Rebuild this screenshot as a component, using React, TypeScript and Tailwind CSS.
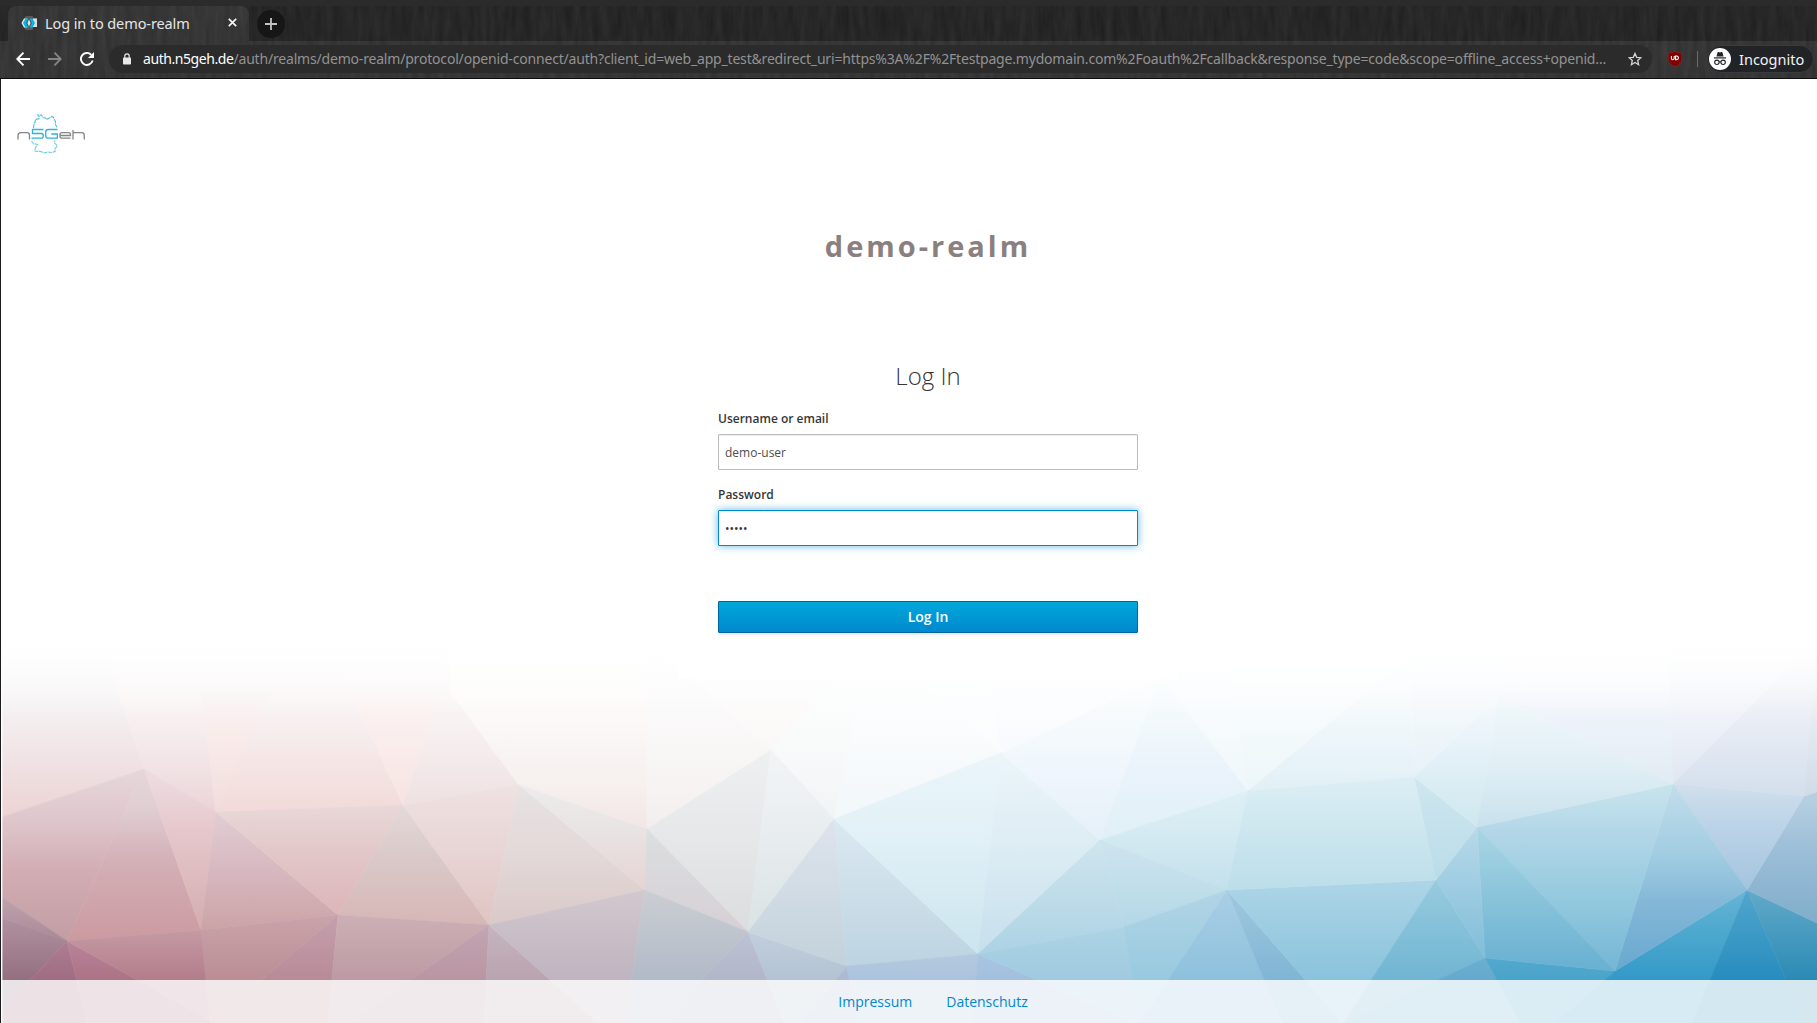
import React from "react";

type Stop = [number, string];
type Facet = { p: string; s: Stop[] };

// Each facet: outline points and colours at page heights, faded vertically.
const facets: Facet[] = [
  { p: "2,640 100,640 119,694 144,769 2,817", s: [[640, "#ffffff"], [700, "#f6f3f4"], [760, "#f0e2e5"], [817, "#ecd3d2"]] },
  { p: "100,640 196,640 202,693 216,812 144,769 119,694", s: [[640, "#ffffff"], [700, "#faf5f4"], [770, "#f1e2e4"], [812, "#ecd3d6"]] },
  { p: "196,640 330,640 342,673 403,805 216,812 202,693", s: [[640, "#ffffff"], [700, "#f9f5f5"], [740, "#f6ebeb"], [812, "#f2dad9"]] },
  { p: "202,693 270,693 216,812", s: [[690, "#f9f5f5"], [730, "#f9edec"], [812, "#f2dcdb"]] },
  { p: "330,640 449,640 441,690 403,805 342,673", s: [[640, "#ffffff"], [690, "#fbf7f7"], [715, "#fbf1f0"], [800, "#f6e4e2"]] },
  { p: "449,640 451,693 519,785 403,805 441,690", s: [[640, "#ffffff"], [700, "#faf6f5"], [800, "#f0e2e3"]] },
  { p: "449,640 647,640 647,829 519,785 451,693", s: [[640, "#ffffff"], [700, "#fdfbfa"], [785, "#f6f0ee"], [829, "#f2e6e5"]] },
  { p: "144,769 2,817 2,897 67,941", s: [[770, "#e6d6da"], [817, "#dfc8cd"], [870, "#d2adb4"], [940, "#c29ea4"]] },
  { p: "144,769 67,941 201,930", s: [[780, "#e4d4d8"], [810, "#dfcdd2"], [860, "#d4b0b7"], [940, "#cb9aa0"]] },
  { p: "144,769 201,930 216,812", s: [[780, "#ecdadf"], [830, "#e6c8cc"], [930, "#d4acae"]] },
  { p: "216,812 201,930 338,915", s: [[820, "#dfcbd0"], [870, "#d8b8c0"], [930, "#cba3a6"]] },
  { p: "216,812 403,805 338,915", s: [[805, "#e9d8d8"], [850, "#e3c8c9"], [915, "#dcb5b8"]] },
  { p: "403,805 338,915 489,925", s: [[805, "#e4d9d9"], [860, "#dac8c8"], [925, "#d7b6b6"]] },
  { p: "403,805 519,785 489,925", s: [[785, "#efe2e2"], [850, "#e8d5d5"], [925, "#dfc4c2"]] },
  { p: "519,785 489,925 645,890", s: [[785, "#e8e2e2"], [860, "#e2d8d7"], [925, "#d9c9c8"]] },
  { p: "519,785 645,890 647,829", s: [[785, "#ecebeb"], [825, "#e9e5e4"], [890, "#e5d4d4"]] },
  { p: "2,897 2,918 67,941", s: [[897, "#c0a3ae"], [940, "#a98996"]] },
  { p: "2,918 67,941 2,1010", s: [[918, "#b191a0"], [980, "#937080"]] },
  { p: "67,941 2,1010 2,1023 87,1023", s: [[941, "#ad7e92"], [980, "#a06c82"]] },
  { p: "67,941 87,1023 215,1023", s: [[941, "#b98498"], [980, "#ac7286"]] },
  { p: "67,941 215,1023 201,930", s: [[930, "#c59aa3"], [980, "#b37d8b"]] },
  { p: "201,930 338,915 210,1023", s: [[915, "#c9a4aa"], [980, "#bb8d95"]] },
  { p: "338,915 210,1023 328,1023", s: [[925, "#c39daa"], [980, "#b98a98"]] },
  { p: "338,915 489,925 350,1023 328,1023", s: [[915, "#ccb0b5"], [980, "#bd9aa3"]] },
  { p: "489,925 350,1023 484,1023", s: [[925, "#c4a5b3"], [980, "#b895a2"]] },
  { p: "489,925 484,1023 598,1023", s: [[925, "#c5b5c0"], [980, "#b9a3af"]] },
  { p: "489,925 645,890 625,1023 598,1023", s: [[890, "#d2c8cf"], [980, "#bfb4bf"]] },
  { p: "647,640 771,750 647,829", s: [[650, "#fefefe"], [690, "#fcfbfc"], [760, "#f8f6f5"], [829, "#f2eeed"]] },
  { p: "647,640 870,640 771,750", s: [[640, "#ffffff"], [690, "#fdfcfc"], [750, "#faf8f7"]] },
  { p: "771,750 870,640 834,819", s: [[660, "#ffffff"], [750, "#f8fafa"], [819, "#f1f4f5"]] },
  { p: "870,640 915,675 1001,753 834,819", s: [[660, "#ffffff"], [720, "#fbfcfd"], [800, "#f3f8fa"]] },
  { p: "870,640 985,640 1001,753 915,675", s: [[660, "#ffffff"], [753, "#f9fcfd"]] },
  { p: "647,829 771,750 748,932", s: [[750, "#eef1f2"], [830, "#e6e8ea"], [930, "#dcdddd"]] },
  { p: "771,750 748,932 834,819", s: [[750, "#f2f5f6"], [850, "#e6ebed"], [930, "#d9e3e4"]] },
  { p: "647,829 645,890 748,932", s: [[830, "#dcdee0"], [930, "#d6d0d5"]] },
  { p: "645,890 748,932 660,1023 625,1023", s: [[890, "#cbced3"], [980, "#b2bac7"]] },
  { p: "748,932 660,1023 785,1023", s: [[932, "#bcc3d4"], [980, "#b1b6c8"]] },
  { p: "748,932 847,966 800,1023 785,1023", s: [[932, "#c2cedd"], [980, "#b3c3d3"]] },
  { p: "847,966 800,1023 858,1023", s: [[966, "#b0bcd6"], [980, "#abb9d3"]] },
  { p: "748,932 834,819 847,966", s: [[820, "#dde3ec"], [880, "#d3dde6"], [960, "#c3d2dc"]] },
  { p: "834,819 847,966 978,954", s: [[820, "#dbe8f1"], [890, "#cddfe9"], [960, "#bed4e2"]] },
  { p: "834,819 1001,753 978,954", s: [[753, "#ebf5fa"], [830, "#e2f1f7"], [950, "#cce5ef"]] },
  { p: "1001,753 978,954 1100,840", s: [[760, "#ebf5f9"], [860, "#daebf3"], [950, "#c6e0ed"]] },
  { p: "1001,753 1100,840 1161,677", s: [[690, "#fafcfd"], [740, "#f3f9fc"], [780, "#eef5fc"], [840, "#e4f0f8"]] },
  { p: "985,640 1161,640 1161,677 1001,753", s: [[660, "#ffffff"], [740, "#f8fbfd"]] },
  { p: "1161,640 1161,677 1100,840 1248,791", s: [[680, "#f9fcfd"], [730, "#f1f8fb"], [770, "#eaf3fb"], [840, "#dff0f6"]] },
  { p: "1161,640 1227,640 1248,791 1161,677", s: [[650, "#ffffff"], [700, "#f9fcfe"], [791, "#eff7fa"]] },
  { p: "1100,840 1248,791 1227,890", s: [[791, "#def0f5"], [840, "#d3e9f1"], [890, "#c2e0ec"]] },
  { p: "978,954 1100,840 1124,927", s: [[840, "#d0e5ef"], [890, "#c0dde9"], [950, "#add3e5"]] },
  { p: "1100,840 1124,927 1227,890", s: [[845, "#cde3ee"], [890, "#bfdeea"], [925, "#b4d7e7"]] },
  { p: "847,966 978,954 972,1023 858,1023", s: [[954, "#b3cade"], [980, "#abc3dd"]] },
  { p: "978,954 972,1023 1135,1023", s: [[954, "#a8c5e2"], [980, "#a2c0de"]] },
  { p: "978,954 1124,927 1148,1023 1135,1023", s: [[925, "#add4e5"], [980, "#a0cae0"]] },
  { p: "1124,927 1227,890 1140,1023", s: [[890, "#b2d5e6"], [980, "#98c9df"]] },
  { p: "1227,890 1140,1023 1282,1023", s: [[890, "#aacfe6"], [980, "#8dc0dc"]] },
  { p: "1227,890 1282,1023 1343,1023", s: [[890, "#a0c8de"], [980, "#80b5d5"]] },
  { p: "1227,890 1436,880 1343,1023", s: [[880, "#aed5e7"], [980, "#89c3dc"]] },
  { p: "1436,880 1343,1023 1485,958", s: [[880, "#98cbde"], [980, "#70b5d3"]] },
  { p: "1485,958 1343,1023 1520,1023", s: [[958, "#6aaed0"], [980, "#66a9ce"]] },
  { p: "1485,958 1615,971 1555,1023 1520,1023", s: [[958, "#52a9ce"], [980, "#4aa3ca"]] },
  { p: "1615,971 1747,890 1692,1023 1555,1023", s: [[890, "#66b5d5"], [940, "#49a6cd"], [980, "#3399c8"]] },
  { p: "1747,890 1692,1023 1805,1023", s: [[890, "#52a6cc"], [980, "#278cbf"]] },
  { p: "1747,890 1817,923 1817,1023 1805,1023", s: [[890, "#62aac9"], [980, "#2b8ab5"]] },
  { p: "1747,890 1804,796 1817,792 1817,923", s: [[800, "#b5cfe1"], [850, "#9dbed8"], [920, "#80aecb"]] },
  { p: "1673,784 1747,890 1804,796", s: [[785, "#d0dfec"], [830, "#bad2e7"], [890, "#a3c4de"]] },
  { p: "1673,784 1747,890 1615,971", s: [[790, "#bfdcea"], [860, "#9fcbe1"], [900, "#85b8d8"], [970, "#68a8cf"]] },
  { p: "1477,827 1673,784 1615,971", s: [[790, "#c5e3ec"], [830, "#b4d7e8"], [900, "#93c9de"], [970, "#74b6d5"]] },
  { p: "1477,827 1615,971 1485,958", s: [[830, "#a9d5e4"], [900, "#88c3da"], [965, "#6ab1d2"]] },
  { p: "1477,827 1436,880 1485,958", s: [[827, "#b8d9e9"], [958, "#80bdd9"]] },
  { p: "1414,777 1436,880 1477,827", s: [[777, "#cfe6ef"], [880, "#b9dce9"]] },
  { p: "1414,777 1477,827 1499,697", s: [[700, "#f4f9fb"], [740, "#e9f3fa"], [780, "#dbeef4"], [827, "#cfe7ef"]] },
  { p: "1499,697 1477,827 1673,784", s: [[700, "#f1f8fa"], [770, "#dfeef5"], [827, "#c8e1ec"]] },
  { p: "1510,640 1668,640 1673,784 1499,697", s: [[640, "#ffffff"], [680, "#f9fbfd"], [720, "#eef3fa"], [784, "#e1ebf3"]] },
  { p: "1668,640 1817,640 1673,784", s: [[640, "#ffffff"], [690, "#f5f7fb"], [730, "#ecf0f8"], [784, "#e0e7f1"]] },
  { p: "1673,784 1817,640 1804,796", s: [[650, "#fdfdfe"], [700, "#eff1f7"], [740, "#e4e9f3"], [800, "#d1deeb"]] },
  { p: "1817,640 1817,792 1804,796", s: [[660, "#fbfbfd"], [700, "#eeeff3"], [795, "#cfdce8"]] },
  { p: "1227,640 1430,640 1248,791", s: [[640, "#ffffff"], [700, "#f9fcfd"], [791, "#ecf6f9"]] },
  { p: "1430,640 1248,791 1414,777 1410,673", s: [[660, "#fefefe"], [700, "#f6fafc"], [750, "#eaf4fa"], [791, "#e1f0f6"]] },
  { p: "1410,640 1510,640 1499,697 1414,777", s: [[640, "#ffffff"], [700, "#f5f9fc"], [777, "#e6f1f7"]] },
  { p: "1248,791 1414,777 1436,880 1227,890", s: [[780, "#dceef4"], [830, "#cde6ef"], [890, "#bbdeea"]] },
];

function Backdrop() {
  return (
    <svg className="absolute inset-0 size-full" viewBox="0 79 1817 944" preserveAspectRatio="none" aria-hidden="true">
      <defs>
        {facets.map((f, i) => {
          const y1 = f.s[0][0];
          const y2 = f.s[f.s.length - 1][0];
          return (
            <linearGradient key={i} id={`facet${i}`} gradientUnits="userSpaceOnUse" x1="0" x2="0" y1={y1} y2={y2}>
              {f.s.map(([y, c]) => (
                <stop key={y} offset={(y - y1) / (y2 - y1)} stopColor={c} />
              ))}
            </linearGradient>
          );
        })}
        <linearGradient id="haze" x1="0" x2="0" y1="0" y2="1">
          <stop offset="0" stopColor="#ffffff" stopOpacity="0.9" />
          <stop offset="0.4" stopColor="#ffffff" stopOpacity="0.55" />
          <stop offset="1" stopColor="#ffffff" stopOpacity="0" />
        </linearGradient>
      </defs>
      {facets.map((f, i) => (
        <polygon key={i} points={f.p} fill={`url(#facet${i})`} stroke={`url(#facet${i})`} strokeWidth="0.6" />
      ))}
      <rect x="0" y="636" width="1817" height="80" fill="url(#haze)" />
      <rect x="0" y="79" width="2" height="944" fill="#ffffff" />
      <rect x="2" y="79" width="1" height="944" fill="#ffffff" opacity="0.4" />
    </svg>
  );
}

function WoodGrain() {
  return (
    <svg className="absolute inset-0 size-full" aria-hidden="true">
      <filter id="grain" x="0" y="0" width="100%" height="100%" colorInterpolationFilters="sRGB">
        <feTurbulence type="fractalNoise" baseFrequency="0.16 0.025" numOctaves="4" seed="7" />
        <feColorMatrix values="0.5 0 0 0 0  0.5 0 0 0 0  0.5 0 0 0 0  0 0 0 0 1" />
        <feComponentTransfer>
          <feFuncR type="linear" slope="0.55" intercept="0.03" />
          <feFuncG type="linear" slope="0.55" intercept="0.03" />
          <feFuncB type="linear" slope="0.55" intercept="0.03" />
        </feComponentTransfer>
      </filter>
      <rect width="100%" height="100%" fill="#262626" />
      <rect width="100%" height="100%" filter="url(#grain)" opacity="0.28" />
    </svg>
  );
}

function Favicon() {
  return (
    <svg width="16" height="14" viewBox="0 0 16 14" aria-hidden="true">
      <path d="M4.500 0h7l1.200 2H16v9h-3.300l-1.200 3h-7L.5 7z" fill="#595959" />
      <path d="M12 2.500h4v8.500h-4z" fill="#dcdcdc" />
      <path d="M3 2.500h3.500L4 7l2.500 4.500H3L.5 7z" fill="#d9eef4" />
      <path d="M4.500 2.500h2.800L5 7l2.300 4.500H4.500L2 7zM8.700 2.500h2.800L14 7l-2.500 4.500H8.700L11 7z" fill="#00b8e3" />
      <path d="M8 3.500L9.600 7 8 10.500 6.400 7z" fill="#cfeaf1" />
    </svg>
  );
}

function TabStrip() {
  return (
    <div className="relative flex h-[35px] items-center">
      <div className="ml-[8px] flex h-full w-[241px] items-center rounded-t-lg bg-white/[0.07] pb-[2px] pl-[13px]">
        <Favicon />
        <span className="ml-[8px] w-[145px] whitespace-nowrap font-['Noto_Sans'] text-[14.500px] leading-5 tracking-[-0.100px] text-[#e6e6e6]">Log in to demo-realm</span>
        <svg className="ml-[38px]" width="9" height="9" viewBox="0 0 9 9" aria-hidden="true">
          <path d="M.8.8l7.400 7.400M8.200.8L.8 8.200" stroke="#f5f5f5" strokeWidth="1.700" />
        </svg>
      </div>
      <div className="ml-[8px] flex size-[28px] items-center justify-center rounded-full bg-[#161616]">
        <svg width="12" height="12" viewBox="0 0 12 12" aria-hidden="true">
          <path d="M6 0v12M0 6h12" stroke="#c4c4c4" strokeWidth="1.800" />
        </svg>
      </div>
    </div>
  );
}

function Toolbar() {
  return (
    <div className="relative flex h-[37px] items-center bg-white/[0.07] pb-px">
      <div className="ml-[16px] flex w-[93px] items-center gap-[18px]">
        <svg width="14" height="14" viewBox="0 0 14 14" fill="none" stroke="#ffffff" strokeWidth="1.900" aria-hidden="true">
          <path d="M14 7H1.500M7.500.7L1.300 7l6.200 6.300" />
        </svg>
        <svg width="14" height="14" viewBox="0 0 14 14" fill="none" stroke="#848484" strokeWidth="1.900" aria-hidden="true">
          <path d="M0 7h12.500M6.500.7L12.700 7l-6.200 6.300" />
        </svg>
        <svg width="14" height="14" viewBox="0 0 14 14" aria-hidden="true">
          <path d="M12.700 8.600A6 6 0 1 1 11.300 2.800" fill="none" stroke="#ffffff" strokeWidth="1.900" />
          <path d="M14 0v6H8z" fill="#ffffff" />
        </svg>
      </div>
      <div className="flex h-[28px] w-[1543px] items-center rounded-full bg-[#2b2b2b] pl-[14px]">
        <svg width="8" height="12" viewBox="0 0 8 12" aria-hidden="true">
          <path d="M1.800 5V3a2.200 2.200 0 0 1 4.400 0v2" fill="none" stroke="#e8e8e8" strokeWidth="1.200" />
          <rect x="0" y="4.500" width="8" height="7" rx="0.800" fill="#e8e8e8" />
        </svg>
        <div className="ml-[12px] w-[1465px] whitespace-nowrap pb-px font-['Noto_Sans'] text-[14px] leading-5 text-[#929292]">
          <span className="tracking-[-0.430px] text-white">auth.n5geh.de</span>
          <span className="tracking-[-0.187px]">/auth/realms/demo-realm/protocol/openid-connect/auth?client_id=web_app_test&amp;redirect_uri=https%3A%2F%2Ftestpage.mydomain.com%2Foauth%2Fcallback&amp;response_type=code&amp;scope=offline_access+openid…</span>
        </div>
        <svg className="ml-[20px]" width="14" height="14" viewBox="0 0 14 14" aria-hidden="true">
          <path d="M7 1.400l1.700 3.900 4.200.4-3.200 2.800.9 4.200L7 10.500l-3.600 2.200.9-4.200L1.100 5.700l4.200-.4z" fill="none" stroke="#d5d5d5" strokeWidth="1.300" />
        </svg>
      </div>
      <svg className="ml-[16px]" width="14" height="16" viewBox="0 0 14 16" aria-hidden="true">
        <path d="M7 .3C8.500 1.500 11 2 13.700 2v6c0 3.500-2.500 6-6.700 7.700C2.800 14 .3 11.500.3 8V2C3 2 5.500 1.500 7 .3z" fill="#800000" stroke="#a52a2a" strokeWidth="0.500" />
        <path d="M3.400 5v2.300a1.400 1.400 0 0 0 2.800 0V5M7.600 5v3.700h1a1.800 1.800 0 0 0 0-3.700z" fill="none" stroke="#ffffff" strokeWidth="1.100" />
      </svg>
      <div className="ml-[15px] h-[16px] w-px bg-[#6b6b6b]" />
      <div className="ml-[9px] flex h-[28px] w-[107px] items-center rounded-full border border-[#3a3b3f] bg-[#222327] pl-px">
        <svg width="22" height="22" viewBox="0 0 22 22" aria-hidden="true">
          <circle cx="11" cy="11" r="11" fill="#ffffff" />
          <path d="M7.500 8.400L8.500 4.600q.3-.8 1.100-.5l1.400.4 1.400-.4q.8-.3 1.100.5l1 3.800z" fill="#222327" />
          <rect x="5" y="9.300" width="12" height="1.200" fill="#222327" />
          <circle cx="7.900" cy="14.300" r="2.200" fill="none" stroke="#222327" strokeWidth="1.100" />
          <circle cx="14.100" cy="14.300" r="2.200" fill="none" stroke="#222327" strokeWidth="1.100" />
          <path d="M10 14q1-.7 2 0" fill="none" stroke="#222327" strokeWidth="1" />
        </svg>
        <span className="ml-[8px] pb-px font-['Noto_Sans'] text-[14.500px] leading-5 text-[#f2f2f2]">Incognito</span>
      </div>
    </div>
  );
}

function Logo() {
  return (
    <svg width="70" height="42" viewBox="0 0 70 42" fill="none" role="img" aria-label="n5Geh">
      <path
        d="M16.500 15l.7-5 1-1 .2-2.500 3.600-.8.200-2-1.500-1.800 3.800.2 1.500 2.600 2.500.3 1.500 1.300 4.500-2.600 1.800.4 2.200 4.600-.2 2.300 1.900 4"
        stroke="#4bbfdd" strokeWidth="1.100" strokeDasharray="4 0.700"
      />
      <path d="M14.500 28l1.800 2.600 4.200.8-2.500 4.200.2 2.600 5 .2 4.500 1.400 3-.9 3.500.6 4-1-.4-2.400 2.600-3.200-3-3.200.600-2.200" stroke="#6fcce3" strokeWidth="1.100" strokeDasharray="4 0.700" />
      <g strokeWidth="1.300">
        <path d="M1 26.500v-3.800q0-3 3-3h6q2.500 0 2.500 2.500v4.300" stroke="#858585" />
        <path d="M26.500 16.500h-11v4h8.800q2 0 2 2.200 0 2.500-2 2.500H14.500" stroke="#2fb3d8" />
        <path d="M40.500 16.500h-9q-2.800 0-2.800 2.500v3.700q0 2.500 2.800 2.500h8.800V21h-6" stroke="#2fb3d8" />
        <path d="M43 22.500h10.500v-.8q0-2-2-2H45q-2 0-2 2v1.500q0 2 2 2h8.500M56 17v9.500M56 19.700h8.500q2.800 0 2.800 2.800v4" stroke="#858585" />
      </g>
    </svg>
  );
}

function LoginForm() {
  return (
    <form className="flex h-[329px] w-[500px] flex-col bg-white px-[40px] pt-[10px]" onSubmit={(e) => e.preventDefault()}>
      <h1 className="text-center text-[24px] font-light leading-8 text-[#363636]">Log In</h1>
      <label htmlFor="username" className="mt-[17px] text-[12px] font-semibold leading-5 text-[#363636]">Username or email</label>
      <input
        id="username"
        defaultValue="demo-user"
        className="mt-[5px] h-[36px] rounded-[1px] border border-[#bbbbbb] bg-white px-[6px] text-[12px] text-[#4d4d4d] shadow-[inset_0_1px_1px_rgba(0,0,0,0.075)] outline-none"
      />
      <label htmlFor="password" className="mt-[15px] text-[12px] font-semibold leading-5 text-[#363636]">Password</label>
      <input
        id="password"
        type="password"
        defaultValue="demo1"
        className="mt-[5px] h-[36px] rounded-[1px] border border-[#0088ce] bg-white px-[6px] text-[12px] text-[#363636] shadow-[inset_0_1px_1px_rgba(0,0,0,0.075),0_0_8px_rgba(0,136,206,0.6)] outline-none"
      />
      <button className="mt-[55px] h-[32px] rounded-[1px] border border-[#00659c] bg-linear-to-b from-[#00a8db] to-[#0088ce] text-[14px] font-semibold leading-5 text-white shadow-[0_2px_3px_rgba(3,3,3,0.1)]">
        Log In
      </button>
    </form>
  );
}

export default function App() {
  return (
    <div className="flex h-[1023px] w-[1817px] flex-col overflow-hidden bg-white font-['Open_Sans',sans-serif]">
      <header className="relative h-[79px] shrink-0 border-b border-[#0d0d0d] bg-[#232323]">
        <WoodGrain />
        <div className="relative h-[6px] bg-[#2b2b2b]" />
        <TabStrip />
        <Toolbar />
      </header>
      <main className="relative flex flex-1 flex-col">
        <Backdrop />
        <div className="absolute inset-y-0 left-0 w-px bg-[#1c1c1e]" />
        <div className="relative ml-[17px] mt-[34px] h-[42px]">
          <Logo />
        </div>
        <div className="relative mt-[71px] flex flex-1 flex-col items-center pl-[39px]">
          <div className="text-[29px] font-bold leading-10 tracking-[3px] text-[#8b7f80]">demo-realm</div>
          <div className="mt-[84px]">
            <LoginForm />
          </div>
        </div>
        <footer className="relative ml-[2px] flex h-[43px] items-center justify-center gap-[34px] bg-white/80 pl-[47px] text-[14px] leading-5 text-[#0088ce]">
          <a>Impressum</a>
          <a>Datenschutz</a>
        </footer>
      </main>
    </div>
  );
}
